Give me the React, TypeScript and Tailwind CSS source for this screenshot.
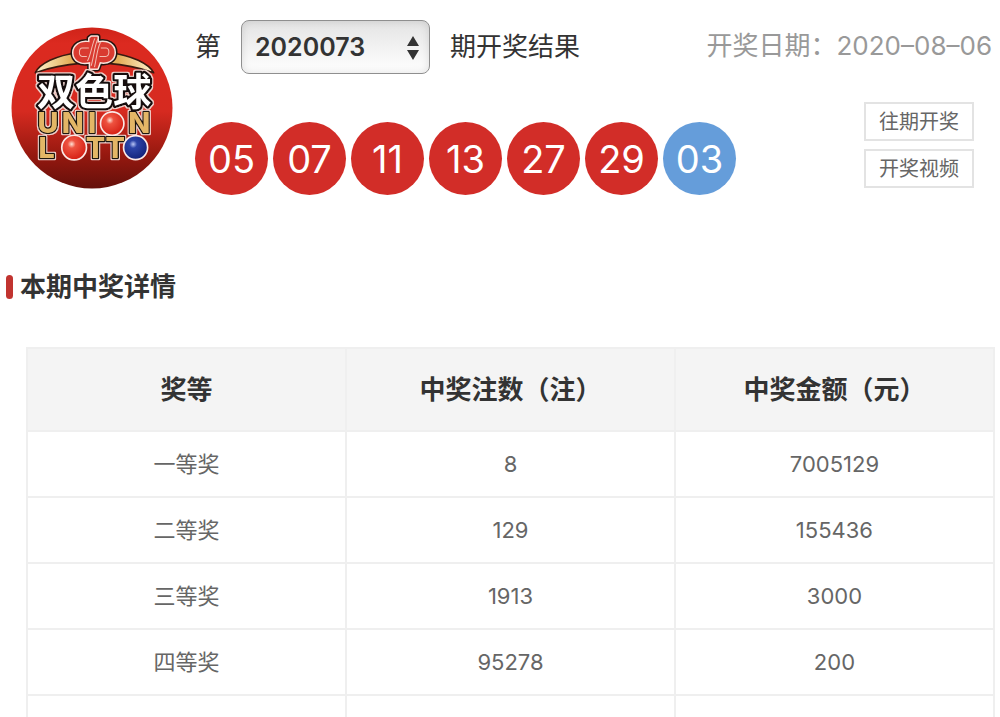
import { useState } from 'react';

interface PrizeRow {
  level: string;
  count: string;
  amount: string;
}

const issues = ['2020073', '2020072', '2020071', '2020070'];
const redBalls = ['05', '07', '11', '13', '27', '29'];
const blueBall = '03';

const prizes: PrizeRow[] = [
  { level: '一等奖', count: '8', amount: '7005129' },
  { level: '二等奖', count: '129', amount: '155436' },
  { level: '三等奖', count: '1913', amount: '3000' },
  { level: '四等奖', count: '95278', amount: '200' },
];

// the round letters of UNION LOTTO are drawn as balls
const latinLetters = [
  { char: 'U', x: 146, y: 354 },
  { char: 'N', x: 220, y: 354 },
  { char: 'I', x: 278, y: 354 },
  { char: 'N', x: 419, y: 354 },
  { char: 'L', x: 142, y: 427 },
  { char: 'T', x: 288, y: 427 },
  { char: 'T', x: 347, y: 427 },
];

const emblem =
  'M270 82 V70 L276 65 H294 V83 C326 75 345 92 345 112 C345 133 326 146 301 141 L294 160 H272 V141 C242 149 222 134 222 113 C222 92 243 76 270 82 Z';

function UnionLottoLogo() {
  return (
    <svg viewBox="35 36 485 485" role="img" aria-label="双色球" className="w-[162px] shrink-0">
      <defs>
        <linearGradient id="disc" x1="0" y1="0" x2="0" y2="1">
          <stop offset="0" stopColor="#cf2419" />
          <stop offset="0.1" stopColor="#dc2a20" />
          <stop offset="0.52" stopColor="#d62a20" />
          <stop offset="0.8" stopColor="#94180f" />
          <stop offset="1" stopColor="#65100b" />
        </linearGradient>
        <linearGradient id="swoosh" x1="0" y1="0" x2="1" y2="0">
          <stop offset="0" stopColor="#fff3d0" />
          <stop offset="0.3" stopColor="#e3ae58" />
          <stop offset="0.7" stopColor="#e3ae58" />
          <stop offset="1" stopColor="#fff3d0" />
        </linearGradient>
        <radialGradient id="redBall" cx="0.4" cy="0.36" r="0.65">
          <stop offset="0" stopColor="#ffe3d6" />
          <stop offset="0.25" stopColor="#ee5340" />
          <stop offset="1" stopColor="#d51f14" />
        </radialGradient>
        <radialGradient id="blueBall" cx="0.4" cy="0.36" r="0.65">
          <stop offset="0" stopColor="#b9c6f5" />
          <stop offset="0.25" stopColor="#2c44a8" />
          <stop offset="1" stopColor="#13227a" />
        </radialGradient>
        {/* pale rim round everything in the group */}
        <filter id="rim" filterUnits="userSpaceOnUse" x="90" y="40" width="390" height="410">
          <feMorphology in="SourceAlpha" operator="dilate" radius="4" result="grown" />
          <feFlood floodColor="#f1d3cd" />
          <feComposite in2="grown" operator="in" result="edge" />
          <feMerge>
            <feMergeNode in="edge" />
            <feMergeNode in="SourceGraphic" />
          </feMerge>
        </filter>
      </defs>

      <circle cx="277.5" cy="278.5" r="241" fill="url(#disc)" />

      {/* roof line behind the emblem */}
      <path
        d="M108 173 C120 146 170 121 235 113 H333 C396 121 448 146 462 173 C420 158 370 148 325 145 H245 C200 148 150 158 108 173 Z"
        fill="url(#swoosh)"
        stroke="#3a1a10"
        strokeWidth="5"
        strokeLinejoin="round"
      />

      <g strokeLinejoin="round">
        <path d={emblem} fill="#241410" stroke="#241410" strokeWidth="18" />
        <path d={emblem} fill="#d93a30" stroke="#fbe3dc" strokeWidth="9" />
        <path d={emblem} fill="#d93a30" />
      </g>
      <g fill="none" stroke="#f3bdb2" strokeWidth="3">
        <path d="M286 70 C277 90 274 120 264 138 M295 72 C285 92 283 126 275 152 M303 82 C293 100 291 130 285 156" />
        <path d="M268 99 H248 C238 99 236 124 248 124 H262" />
        <path d="M304 99 H320 C331 99 331 124 318 124 H300" />
      </g>

      <g filter="url(#rim)" textAnchor="middle" strokeLinejoin="round">
        <g
          fontSize="86"
          fontWeight="800"
          className="fill-[#e3b666] stroke-[#1a1210] stroke-[8px] font-[Inter,sans-serif] [paint-order:stroke]"
        >
          {latinLetters.map((l, idx) => (
            <text key={idx} x={l.x} y={l.y}>
              {l.char}
            </text>
          ))}
        </g>
        <text
          x="284"
          y="270"
          fontSize="114"
          fontWeight="700"
          className="fill-white stroke-[#15100f] stroke-[14px] font-['Noto_Sans_CJK_SC',sans-serif] [paint-order:stroke]"
        >
          双色球
        </text>
      </g>

      <g stroke="#fbe9e6" strokeWidth="5">
        <circle cx="338" cy="325" r="35" fill="url(#redBall)" />
        <circle cx="224" cy="397" r="37" fill="url(#redBall)" />
        <circle cx="408" cy="397" r="36" fill="url(#blueBall)" />
      </g>
    </svg>
  );
}

function Ball({ value, blue = false }: { value: string; blue?: boolean }) {
  return (
    <li
      className={`flex size-[73px] items-center justify-center rounded-full text-[38px] leading-none text-white ${
        blue ? 'bg-[#659dda]' : 'bg-[#d22d28]'
      }`}
    >
      {value}
    </li>
  );
}

function IssueSelect() {
  const [issue, setIssue] = useState(issues[0]);

  return (
    <div className="flex items-center text-[26px] leading-8 text-[#333]">
      <label htmlFor="issue">第</label>
      <div className="relative mx-5">
        <select
          id="issue"
          value={issue}
          onChange={(e) => setIssue(e.target.value)}
          className="h-[54px] w-[189px] appearance-none rounded-lg border border-[#8f8f8f] bg-linear-to-b from-[#e4e4e4] to-white pr-10 pl-[13px] text-[25px] font-semibold text-[#333] shadow-[inset_0_0_8px_rgba(0,0,0,0.12)]"
        >
          {issues.map((i) => (
            <option key={i}>{i}</option>
          ))}
        </select>
        <svg viewBox="0 0 12 24" className="pointer-events-none absolute top-4 right-[11px] h-6 w-3 fill-[#333]">
          <path d="M6 0 L12 10 H0 Z M6 24 L12 14 H0 Z" />
        </svg>
      </div>
      <span>期开奖结果</span>
    </div>
  );
}

export default function App() {
  return (
    <main className="bg-white font-[Inter,'Noto_Sans_CJK_SC',sans-serif]">
      <header className="flex items-start pr-2 pl-[11px]">
        <div className="pt-[27px]">
          <UnionLottoLogo />
        </div>

        <div className="ml-[22px] flex flex-col pt-5">
          <IssueSelect />
          <ul className="mt-12 flex gap-[5px]">
            {redBalls.map((n) => (
              <Ball key={n} value={n} />
            ))}
            <Ball value={blueBall} blue />
          </ul>
        </div>

        <div className="ml-auto flex shrink-0 flex-col items-end pt-[30px]">
          <p className="-ml-12 text-[26px] leading-8 whitespace-nowrap text-[#999]">
            开奖日期：<time dateTime="2020-08-06">2020–08–06</time>
          </p>
          <nav className="mt-10 mr-[18px] flex flex-col gap-2 text-[20px] text-[#666]">
            <a href="#history" className="border-2 border-[#e3e3e3] px-[13px] pt-0.5 leading-[33px]">
              往期开奖
            </a>
            <a href="#video" className="border-2 border-[#e3e3e3] px-[13px] pt-0.5 leading-[33px]">
              开奖视频
            </a>
          </nav>
        </div>
      </header>

      <section className="mt-[72px] pr-[5px] pl-[6px]">
        <h2 className="flex items-center gap-[7px] text-[26px] leading-10 font-bold text-[#333]">
          <span className="h-6 w-[7px] rounded-sm bg-[#c13430]" />
          本期中奖详情
        </h2>

        <div className="mt-10 pl-5">
          <table className="w-full table-fixed border-collapse text-center text-[22px] text-[#666]">
            <colgroup>
              <col className="w-[33%]" />
              <col className="w-[34%]" />
              <col className="w-[33%]" />
            </colgroup>
            <thead>
              <tr className="h-[83px] bg-[#f4f4f4] text-[26px] text-[#333]">
                <th className="border-2 border-[#efefef]">奖等</th>
                <th className="border-2 border-[#efefef]">中奖注数（注）</th>
                <th className="border-2 border-[#efefef]">中奖金额（元）</th>
              </tr>
            </thead>
            <tbody>
              {prizes.map((p) => (
                <tr key={p.level} className="h-[66px]">
                  <td className="border-2 border-[#efefef]">{p.level}</td>
                  <td className="border-2 border-[#efefef]">{p.count}</td>
                  <td className="border-2 border-[#efefef]">{p.amount}</td>
                </tr>
              ))}
              <tr className="h-[22px]">
                <td className="border-x-2 border-[#efefef]" />
                <td className="border-x-2 border-[#efefef]" />
                <td className="border-x-2 border-[#efefef]" />
              </tr>
            </tbody>
          </table>
        </div>
      </section>
    </main>
  );
}
